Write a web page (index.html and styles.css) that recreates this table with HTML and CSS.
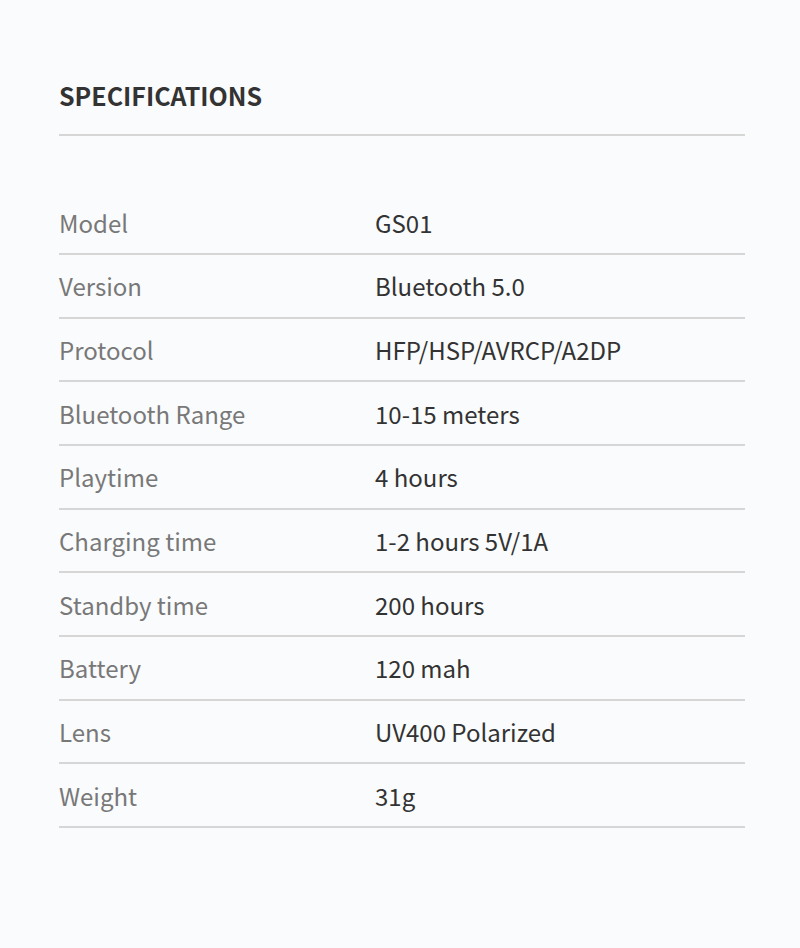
FILE: index.html
```html
<!DOCTYPE html>
<html lang="en">
<head>
<meta charset="utf-8">
<link rel="stylesheet" href="styles.css">
</head>
<body>
<main class="specs">
  <h2 class="specs-title">SPECIFICATIONS</h2>
  <div class="specs-table">
    <div class="row"><span class="label">Model</span><span class="value">GS01</span></div>
    <div class="row"><span class="label">Version</span><span class="value">Bluetooth 5.0</span></div>
    <div class="row"><span class="label">Protocol</span><span class="value">HFP/HSP/AVRCP/A2DP</span></div>
    <div class="row"><span class="label">Bluetooth Range</span><span class="value">10-15 meters</span></div>
    <div class="row"><span class="label">Playtime</span><span class="value">4 hours</span></div>
    <div class="row"><span class="label">Charging time</span><span class="value">1-2 hours 5V/1A</span></div>
    <div class="row"><span class="label">Standby time</span><span class="value">200 hours</span></div>
    <div class="row"><span class="label">Battery</span><span class="value">120 mah</span></div>
    <div class="row"><span class="label">Lens</span><span class="value">UV400 Polarized</span></div>
    <div class="row"><span class="label">Weight</span><span class="value">31g</span></div>
  </div>
</main>
</body>
</html>
```
FILE: styles.css
```css
html, body {
  margin: 0;
  padding: 0;
  background: #fafbfc;
}
body {
  font-family: "Noto Sans CJK SC", "Noto Sans", sans-serif;
  width: 800px;
  height: 948px;
  overflow: hidden;
}
.specs {
  padding: 77px 55px 0 59px;
}
.specs-title {
  margin: 0;
  font-size: 25px;
  line-height: 36px;
  font-weight: 700;
  color: #333333;
  padding-bottom: 21px;
  border-bottom: 2px solid #d6d6d6;
  letter-spacing: 0;
}
.specs-table {
  margin-top: 55.5px;
}
.row {
  display: flex;
  height: 61.67px;
  align-items: center;
  border-bottom: 2px solid #d6d6d6;
  font-size: 24px;
}
.label {
  width: 316px;
  flex: none;
  color: #787878;
}
.value {
  color: #333333;
}
```
